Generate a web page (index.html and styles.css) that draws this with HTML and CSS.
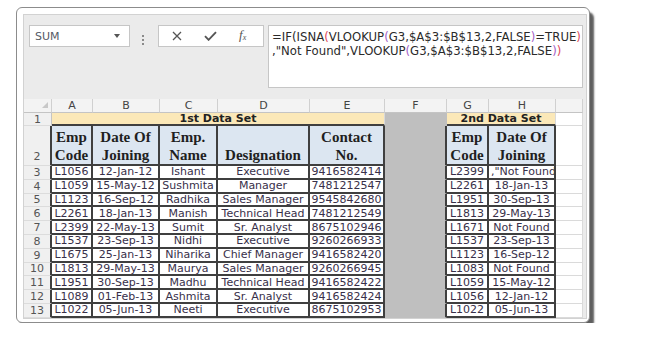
FILE: index.html
```html
<!DOCTYPE html>
<html>
<head>
    <title>VLOOKUP with ISNA</title>
    <link rel="stylesheet" href="styles.css">
</head>
<body>
    <div class="frame">
        <div class="excel">
            <div class="formula-bar">
                <div class="name-box">
                    <span>SUM</span>
                    <span class="arrow"></span>
                </div>
                <div class="grip"><i></i><i></i><i></i></div>
                <div class="fn-box">
                    <svg width="10" height="10" viewBox="0 0 10 10"><path d="M1 1L9 9M9 1L1 9" stroke="#555" stroke-width="1.3" fill="none"/></svg>
                    <svg width="13" height="10" viewBox="0 0 13 10"><path d="M1 5.2L4.6 8.8L12 1.2" stroke="#555" stroke-width="1.9" fill="none"/></svg>
                    <span class="fx">f<sub>x</sub></span>
                </div>
                <div class="formula">
                    <div>=IF(ISNA<span class="p1">(</span>VLOOKUP<span class="p2">(</span>G3,$A$3:$B$13,2,FALSE<span class="p2">)</span>=TRUE<span class="p1">)</span></div>
                    <div>,"Not Found",VLOOKUP<span class="p2">(</span>G3,$A$3:$B$13,2,FALSE<span class="p2">)</span><span class="p1">)</span></div>
                </div>
            </div>

            <table class="sheet">
                <colgroup>
                    <col class="w-rh">
                    <col class="w-a">
                    <col class="w-b">
                    <col class="w-c">
                    <col class="w-d">
                    <col class="w-e">
                    <col class="w-f">
                    <col class="w-g">
                    <col class="w-h">
                    <col class="w-i">
                </colgroup>
                <thead>
                    <tr class="col-heads">
                        <th class="corner"><span class="tri"></span></th>
                        <th>A</th>
                        <th>B</th>
                        <th>C</th>
                        <th>D</th>
                        <th>E</th>
                        <th>F</th>
                        <th>G</th>
                        <th>H</th>
                        <th></th>
                    </tr>
                </thead>
                <tbody id="sheetBody">
                    <tr class="r-title">
                        <td class="rh">1</td>
                        <td class="title" colspan="5">1st Data Set</td>
                        <td class="gap"></td>
                        <td class="title" colspan="2">2nd Data Set</td>
                        <td></td>
                    </tr>
                    <tr class="r-head">
                        <td class="rh edge low">2</td>
                        <td class="head">Emp<br>Code</td>
                        <td class="head">Date Of<br>Joining</td>
                        <td class="head">Emp.<br>Name</td>
                        <td class="head">Designation</td>
                        <td class="head">Contact<br>No.</td>
                        <td class="gap edge"></td>
                        <td class="head">Emp<br>Code</td>
                        <td class="head">Date Of<br>Joining</td>
                        <td></td>
                    </tr>
                </tbody>
            </table>
        </div>
    </div>

    <script>
        const rows = [
            ["L1056", "12-Jan-12", "Ishant", "Executive", "9416582414", "L2399", ",\"Not Found"],
            ["L1059", "15-May-12", "Sushmita", "Manager", "7481212547", "L2261", "18-Jan-13"],
            ["L1123", "16-Sep-12", "Radhika", "Sales Manager", "9545842680", "L1951", "30-Sep-13"],
            ["L2261", "18-Jan-13", "Manish", "Technical Head", "7481212549", "L1813", "29-May-13"],
            ["L2399", "22-May-13", "Sumit", "Sr. Analyst", "8675102946", "L1671", "Not Found"],
            ["L1537", "23-Sep-13", "Nidhi", "Executive", "9260266933", "L1537", "23-Sep-13"],
            ["L1675", "25-Jan-13", "Niharika", "Chief Manager", "9416582420", "L1123", "16-Sep-12"],
            ["L1813", "29-May-13", "Maurya", "Sales Manager", "9260266945", "L1083", "Not Found"],
            ["L1951", "30-Sep-13", "Madhu", "Technical Head", "9416582422", "L1059", "15-May-12"],
            ["L1089", "01-Feb-13", "Ashmita", "Sr. Analyst", "9416582424", "L1056", "12-Jan-12"],
            ["L1022", "05-Jun-13", "Neeti", "Executive", "8675102953", "L1022", "05-Jun-13"]
        ];

        const sheetBody = document.getElementById("sheetBody");

        // one sheet row per record, starting at row 3
        rows.forEach((r, i) => {
            const tr = document.createElement("tr");
            tr.className = "r-data";
            const editing = i === 0 ? " editing" : "";
            tr.innerHTML = `
                <td class="rh edge">${i + 3}</td>
                <td class="d">${r[0]}</td>
                <td class="d">${r[1]}</td>
                <td class="d">${r[2]}</td>
                <td class="d">${r[3]}</td>
                <td class="d">${r[4]}</td>
                <td class="gap edge"></td>
                <td class="d">${r[5]}</td>
                <td class="d${editing}">${r[6]}</td>
                <td></td>
            `;
            sheetBody.appendChild(tr);
        });
    </script>
</body>
</html>
```

FILE: styles.css
```css
body {
    margin: 0;
    background-color: white;
    font-family: "DejaVu Sans", Verdana, sans-serif;
}

.frame {
    width: 574px;
    height: 316px;
    margin: 7px 0 0 16px;
    padding: 6px 2px 3px 6px;
    box-sizing: border-box;
    border: 1px solid #8c8c8c;
    border-radius: 6px;
    box-shadow: 4px 5px 2px #5f5f5f;
    background-color: white;
}

.excel {
    height: 100%;
    box-sizing: border-box;
    background-color: #ebebeb;
    border: 1px solid #d2d2d2;
    overflow: hidden;
}

/* formula bar */

.formula-bar {
    display: flex;
    align-items: flex-start;
    height: 84px;
    padding: 10px 0 0 5px;
    box-sizing: border-box;
}

.name-box,
.fn-box,
.formula {
    box-sizing: border-box;
    background-color: white;
    border: 1px solid #c6c6c6;
}

.name-box {
    width: 101px;
    height: 22px;
    display: flex;
    align-items: center;
    justify-content: space-between;
    padding: 0 9px 0 5px;
    font-size: 11px;
    color: #555a66;
}

.arrow {
    width: 0;
    height: 0;
    border-left: 3px solid transparent;
    border-right: 3px solid transparent;
    border-top: 4px solid #555;
}

.grip {
    display: flex;
    flex-direction: column;
    gap: 2px;
    margin: 10px 0 0 12px;
}

.grip i {
    width: 2px;
    height: 2px;
    background-color: #8a8a8a;
}

.fn-box {
    width: 106px;
    height: 22px;
    margin-left: 14px;
    display: flex;
    align-items: center;
    gap: 22px;
    padding-left: 13px;
}

.fx {
    font-family: "Liberation Serif", serif;
    font-style: italic;
    font-size: 13px;
    color: #555;
    line-height: 12px;
}

.fx sub {
    font-size: 8px;
    vertical-align: -1px;
}

.formula {
    width: 315px;
    height: 63px;
    margin-left: 4px;
    padding: 4px 0 0 3px;
    font-size: 11.7px;
    line-height: 14px;
    color: #2a2a2a;
    white-space: nowrap;
    overflow: hidden;
}

.p1 {
    color: #e0485a;
}

.p2 {
    color: #a35fc8;
}

/* sheet grid */

.sheet {
    width: 559px;
    table-layout: fixed;
    border-collapse: separate;
    border-spacing: 0;
}

.w-rh { width: 28px; }
.w-a { width: 41px; }
.w-b { width: 67px; }
.w-c { width: 58px; }
.w-d { width: 92px; }
.w-e { width: 75px; }
.w-f { width: 62px; }
.w-g { width: 42px; }
.w-h { width: 67px; }
.w-i { width: 27px; }

.sheet th,
.sheet td {
    padding: 0;
    font-size: 11px;
    line-height: 11px;
    text-align: center;
    white-space: nowrap;
    overflow: hidden;
    color: #38304a;
    background-color: white;
    border-right: 1px solid #dadada;
    border-bottom: 1px solid #dadada;
}

.col-heads {
    height: 13px;
}

.sheet .col-heads th {
    font-weight: normal;
    color: #444;
    background-color: #f3f3f3;
    border-right-color: #d0d0d0;
    border-bottom-color: #c4c4c4;
}

.sheet .corner {
    text-align: right;
    vertical-align: bottom;
    padding: 0 3px 2px 0;
}

.tri {
    display: inline-block;
    width: 0;
    height: 0;
    border-left: 6px solid transparent;
    border-bottom: 6px solid #c8c8c8;
}

.r-title {
    height: 13px;
}

.r-head {
    height: 40px;
}

.r-data {
    height: 13.8px;
}

.sheet .rh {
    color: #555;
    background-color: #f0f0f0;
    border-right-color: #c4c4c4;
    border-bottom-color: #dcdcdc;
}

.sheet .rh.edge {
    border-right: 2px solid #3f3f3f;
}

.sheet .rh.low {
    vertical-align: bottom;
    padding-bottom: 3px;
}

.sheet .title {
    font-weight: bold;
    color: #222;
    background-color: #fbe8b8;
    border-bottom: 2px solid #3f3f3f;
}

.sheet .head {
    font-family: "Liberation Serif", serif;
    font-weight: bold;
    font-size: 15px;
    line-height: 18px;
    color: #1f1f1f;
    vertical-align: bottom;
    background-color: #dce6f1;
    border-right: 2px solid #3f3f3f;
    border-bottom: 2px solid #3f3f3f;
}

.sheet .d {
    border-right: 2px solid #3f3f3f;
    border-bottom: 2px solid #3f3f3f;
}

.sheet .gap {
    background-color: #bfbfbf;
    border-right-color: #bfbfbf;
    border-bottom-color: #bfbfbf;
}

.sheet .gap.edge {
    border-right: 2px solid #3f3f3f;
}

.sheet .editing {
    text-align: left;
    text-overflow: clip;
    padding-left: 2px;
}
```
